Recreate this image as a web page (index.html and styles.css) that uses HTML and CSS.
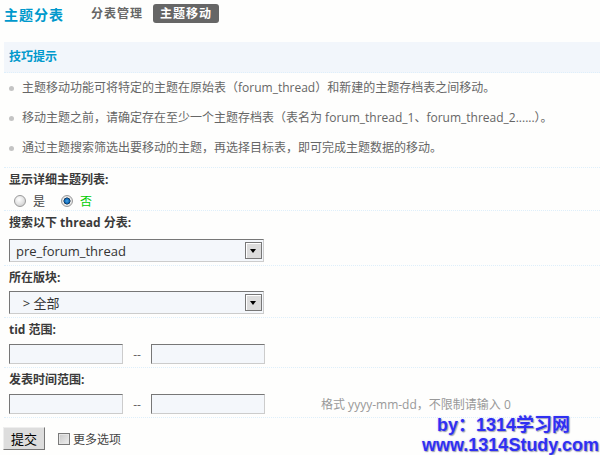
FILE: index.html
```html
<!DOCTYPE html>
<html lang="zh-CN">
<head>
  <meta charset="UTF-8" />
  <title>主题分表 - 主题移动</title>
  <link rel="stylesheet" href="styles.css">
</head>
<body>
  <div class="page">
    <div class="head">
      <h3>主题分表</h3>
      <ul class="tabs">
        <li><a href="#">分表管理</a></li>
        <li class="current"><a href="#">主题移动</a></li>
      </ul>
    </div>

    <div class="tips">
      <div class="tips-title">技巧提示</div>
      <ul class="tips-list">
        <li>主题移动功能可将特定的主题在原始表（forum_thread）和新建的主题存档表之间移动。</li>
        <li>移动主题之前，请确定存在至少一个主题存档表（表名为 forum_thread_1、forum_thread_2......）。</li>
        <li>通过主题搜索筛选出要移动的主题，再选择目标表，即可完成主题数据的移动。</li>
      </ul>
    </div>

    <form class="move-form" id="move-form">
      <div class="row row-radio">
        <div class="label">显示详细主题列表:</div>
        <div class="radios">
          <label class="radio-item"><input type="radio" name="detail" value="1" /> 是</label>
          <label class="radio-item checked"><input type="radio" name="detail" value="0" checked /> 否</label>
        </div>
      </div>

      <div class="row">
        <div class="label">搜索以下 thread 分表:</div>
        <div class="sel sel-first">
          <select name="sourcetable">
            <option>pre_forum_thread</option>
          </select>
          <span class="arrow"></span>
        </div>
      </div>

      <div class="row">
        <div class="label">所在版块:</div>
        <div class="sel">
          <select name="inforum">
            <option>&nbsp;&nbsp;&gt; 全部</option>
          </select>
          <span class="arrow"></span>
        </div>
      </div>

      <div class="row">
        <div class="label">tid 范围:</div>
        <div class="range">
          <input type="text" name="tidmin" />
          <span class="sep">--</span>
          <input type="text" name="tidmax" />
        </div>
      </div>

      <div class="row">
        <div class="label">发表时间范围:</div>
        <div class="range">
          <input type="text" name="starttime" />
          <span class="sep">--</span>
          <input type="text" name="endtime" />
          <span class="hint">格式 yyyy-mm-dd，不限制请输入 0</span>
        </div>
      </div>

      <div class="submit-row">
        <button type="submit">提交</button>
        <label class="more"><input type="checkbox" name="more" />更多选项</label>
      </div>
    </form>

    <div class="watermark">
      <div class="wm-line wm-by">by：1314学习网</div>
      <div class="wm-line">www.1314Study.com</div>
    </div>
  </div>

  <script>
    document.getElementById('move-form').addEventListener('submit', e => {
      e.preventDefault();
    });
  </script>
</body>
</html>
```

FILE: styles.css
```css
* {
  margin: 0;
  padding: 0;
  box-sizing: border-box;
}

body {
  background-color: #fefefd;
  font-family: "Open Sans", "Noto Sans CJK SC", sans-serif;
  font-size: 12px;
  color: #666;
}

.page {
  position: relative;
  height: 455px;
  padding-left: 4px;
  overflow: hidden;
}

.head {
  display: flex;
  align-items: center;
  height: 27px;
}

.head h3 {
  font-size: 14px;
  letter-spacing: 1px;
  color: #09c;
  margin-right: 20px;
}

.tabs {
  display: flex;
  list-style: none;
  gap: 3px;
}

.tabs a {
  display: block;
  padding: 0 7px;
  line-height: 19px;
  border-radius: 3px;
  font-weight: bold;
  letter-spacing: 1px;
  color: #666;
  text-decoration: none;
}

.tabs .current a {
  background-color: #666;
  color: white;
}

.tips {
  margin-top: 15px;
}

.tips-title {
  height: 31px;
  line-height: 30px;
  padding-left: 5px;
  background-color: #f2f6fb;
  border-bottom: 1px dotted #deeffb;
  font-weight: bold;
  color: #09c;
}

.tips-list {
  list-style: none;
  padding-bottom: 4px;
}

.tips-list li {
  position: relative;
  line-height: 30px;
  padding-left: 18px;
}

.tips-list li::before {
  content: "";
  position: absolute;
  left: 5px;
  top: 13px;
  width: 5px;
  height: 5px;
  border-radius: 50%;
  background-color: #c4c4c4;
}

.row {
  border-top: 1px dotted #deeffb;
  padding: 0 0 3px 5px;
}

.row-radio {
  padding-bottom: 0;
}

.label {
  line-height: 24px;
  font-weight: bold;
  color: #3a3a3a;
}

.radios {
  display: flex;
  align-items: center;
  height: 18px;
}

.radio-item {
  display: flex;
  align-items: center;
  gap: 7px;
  margin-left: 5px;
  margin-right: 11px;
  color: #444;
}

.radio-item.checked {
  color: #00cc00;
}

.radio-item input {
  appearance: none;
  width: 12px;
  height: 12px;
  border-radius: 50%;
  border: 1px solid #9a9a9a;
  background: radial-gradient(circle at 40% 35%, #fff 0, #e4e4e4 50%, #c2c2c2 100%);
}

.radio-item input:checked {
  background: radial-gradient(circle at 50% 50%, #4aa8e8 0, #0b62b0 2.5px, #123 3.2px, #eee 3.8px, #c8c8c8 100%);
}

.sel {
  display: flex;
  align-items: center;
  width: 255px;
  height: 23px;
  margin-top: 1px;
  padding-right: 1px;
  border: 1px solid;
  border-color: #777 #ccc #ccc #777;
  background-color: #f4f7fb;
}

.sel-first {
  margin-top: 4px;
}

.sel select {
  flex: 1;
  appearance: none;
  border: none;
  background: transparent;
  font-family: "Open Sans", "Noto Sans CJK SC", sans-serif;
  font-size: 13px;
  color: #333;
  padding-left: 6px;
  outline: none;
}

.sel .arrow {
  position: relative;
  width: 17px;
  height: 17px;
  border: 1px solid #777;
  box-shadow: inset 1px 1px 0 #fff;
  background-color: #dcdcdc;
}

.sel .arrow::after {
  content: "";
  position: absolute;
  left: 4px;
  top: 6px;
  border-left: 3.5px solid transparent;
  border-right: 3.5px solid transparent;
  border-top: 4px solid #000;
}

.range {
  display: flex;
  align-items: center;
  margin-top: 2px;
}

.range input {
  width: 114px;
  height: 20px;
  border: 1px solid;
  border-color: #777 #ccc #ccc #777;
  background-color: #f4f7fb;
}

.sep {
  width: 28px;
  text-align: center;
  color: #666;
}

.hint {
  margin-left: 56px;
  color: #999;
}

.submit-row {
  display: flex;
  align-items: center;
  border-top: 1px dotted #deeffb;
  padding-top: 9px;
}

button {
  width: 42px;
  height: 23px;
  margin-left: -1px;
  border: 1px solid;
  border-color: #eee #777 #777 #eee;
  background-color: #ddd;
  font-family: "Noto Sans CJK SC", sans-serif;
  font-size: 13px;
  color: #000;
}

.more {
  display: flex;
  align-items: center;
  margin-left: 13px;
  color: #444;
}

.more input {
  appearance: none;
  width: 12px;
  height: 12px;
  margin-right: 3px;
  border: 1px solid #7a7a7a;
  background: linear-gradient(135deg, #c8c8c8, #efefef);
  box-shadow: inset 0 0 0 1px #e6e6e6;
}

.watermark {
  position: absolute;
  left: 422px;
  top: 415px;
  font-family: "Liberation Sans", "Noto Sans CJK SC", sans-serif;
  font-size: 18px;
  font-weight: bold;
  line-height: 20px;
  color: #2f2ff2;
  text-shadow: 0 0 2px #c8c8ff, 1px 1px 1px #999;
}

.wm-by {
  padding-left: 15px;
}
```
